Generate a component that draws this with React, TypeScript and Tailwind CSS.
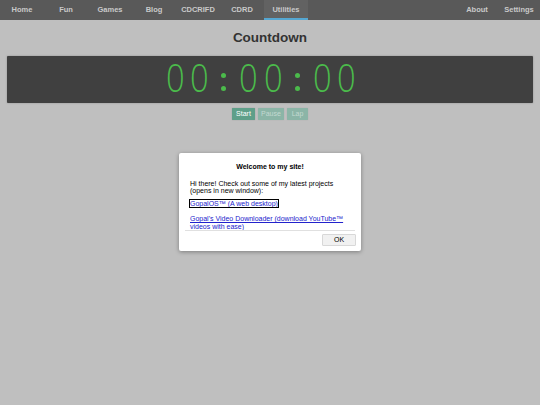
import React from "react";

const leftTabs = ["Home", "Fun", "Games", "Blog", "CDCRIFD", "CDRD", "Utilities"];
const rightTabs = ["About", "Settings"];

function NavBar() {
  return (
    <nav className="flex h-[20px] items-stretch justify-between bg-[#595959] text-[7.5px] font-bold text-[#c9c9c9]">
      <div className="flex">
        {leftTabs.map((t) => (
          <div
            key={t}
            className={
              t === "Utilities"
                ? "flex w-[44px] items-center justify-center border-b-2 border-[#55a7d2] bg-[#626262] pt-[2px]"
                : "flex w-[44px] items-center justify-center"
            }
          >
            {t}
          </div>
        ))}
      </div>
      <div className="flex">
        {rightTabs.map((t) => (
          <div key={t} className="flex w-[42px] items-center justify-center">
            {t}
          </div>
        ))}
      </div>
    </nav>
  );
}

function Timer() {
  const chars = "00:00:00".split("");
  return (
    <div className="mx-[7px] mt-[9px] flex h-[47px] items-center justify-center rounded-[1px] bg-[#404040] shadow-[0_0_2px_#8a8a8a]">
      <div className="flex items-center pr-[19px]">
        {chars.map((c, i) =>
          c === ":" ? (
            <div key={i} className="mt-[5px] flex w-[24.5px] flex-col items-center gap-[8px]">
              <span className="h-[5px] w-[5px] rounded-full bg-[#4bbb4b]" />
              <span className="h-[5px] w-[5px] rounded-full bg-[#4bbb4b]" />
            </div>
          ) : (
            <div
              key={i}
              className="mb-[6px] flex w-[24.5px] scale-x-[0.86] justify-center font-['Open_Sans',sans-serif] text-[38px] font-light leading-none text-[#4bbb4b]"
            >
              {c}
            </div>
          )
        )}
      </div>
    </div>
  );
}

export default function App() {
  return (
    <div className="relative h-[405px] w-[540px] overflow-hidden bg-[#bfbfbf] font-['Liberation_Sans',Arial,sans-serif]">
      <NavBar />
      <h1 className="mt-[9px] text-center text-[13.5px] font-bold leading-[18px] text-[#333333]">Countdown</h1>
      <Timer />
      <div className="mt-[5px] flex justify-center gap-[3px] text-[7px] text-white">
        <button className="h-[12px] w-[23px] rounded-[1px] bg-[#5e9f89] shadow-[0_0_1px_#777]">Start</button>
        <button className="h-[12px] w-[26px] rounded-[1px] bg-[#8bb5a7] text-[#c3d9d1] shadow-[0_0_1px_#999]">Pause</button>
        <button className="h-[12px] w-[21px] rounded-[1px] bg-[#8bb5a7] text-[#c3d9d1] shadow-[0_0_1px_#999]">Lap</button>
      </div>

      <div className="absolute left-[179px] top-[153px] flex h-[98px] w-[182px] flex-col rounded-[2px] bg-white shadow-[0_1px_4px_rgba(0,0,0,0.35)]">
        <div className="h-[77px] px-[11px] pt-[10px] text-[7px] leading-[7.5px] text-black">
          <div className="text-center font-bold">Welcome to my site!</div>
          <p className="mt-[9px]">
            Hi there! Check out some of my latest projects
            <br />
            (opens in new window):
          </p>
          <p className="mt-[5px]">
            <a href="#" className="text-[#2222cc] underline outline outline-1 outline-offset-0 outline-black">
              GopalOS™ (A web desktop)
            </a>
          </p>
          <p className="mt-[8px]">
            <a href="#" className="text-[#2222cc] underline">
              Gopal's Video Downloader (download YouTube™ videos with ease)
            </a>
          </p>
        </div>
        <div className="mx-[6px] border-t border-[#e0e0e0]" />
        <div className="flex justify-end px-[5px] pt-[3px]">
          <button className="h-[12px] w-[34px] rounded-[1px] border border-[#d8d8d8] bg-[#f1f1f1] text-[7px] text-black">
            OK
          </button>
        </div>
      </div>
    </div>
  );
}
